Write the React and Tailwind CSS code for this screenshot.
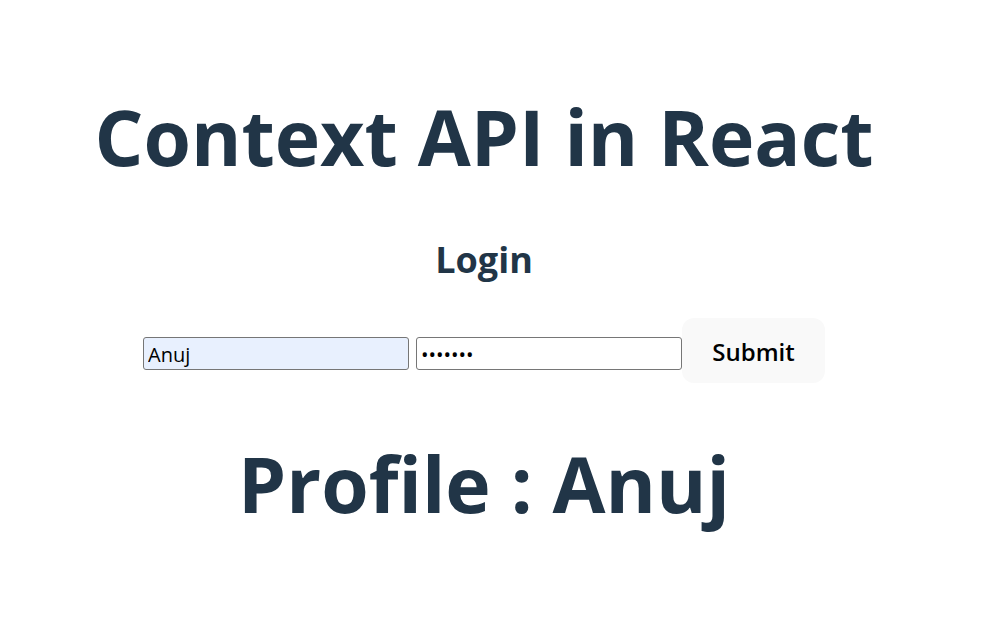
import React, { useState } from 'react';

const FONT = { fontFamily: '"Open Sans", "Noto Sans", sans-serif' };

const App = () => {
  const [name, setName] = useState('Anuj');
  const [password, setPassword] = useState('1234567');

  return (
    <div className="min-h-[620px] w-[968px] bg-white text-[#213547]" style={FONT}>
      <div className="flex flex-col items-center pt-[95px]">
        <h1 className="text-[76.8px] leading-[1.1] font-bold">Context API in React</h1>

        <h2 className="mt-[54px] text-[36px] leading-[1.5] font-bold">Login</h2>

        <div className="mt-[31px] flex items-start">
          <input
            type="text"
            value={name}
            onChange={(e) => setName(e.target.value)}
            className="mt-[19px] h-[33px] w-[266px] rounded-[3px] border border-[#767676] bg-[#e8f0fe] px-[4px] pt-[1px] text-[20px] text-black outline-none"
          />
          <input
            type="password"
            value={password}
            onChange={(e) => setPassword(e.target.value)}
            className="ml-[7px] mt-[19px] h-[33px] w-[266px] rounded-[3px] border border-[#767676] bg-white px-[4px] pt-[1px] text-[20px] text-black outline-none"
          />
          <button className="h-[65px] w-[143px] rounded-[12px] bg-[#f9f9f9] pt-[3px] text-[24px] font-semibold text-black">
            Submit
          </button>
        </div>

        <h1 className="mt-[59px] text-[76.8px] leading-[1.1] font-bold">Profile : {name}</h1>
      </div>
    </div>
  );
};

export default App;
